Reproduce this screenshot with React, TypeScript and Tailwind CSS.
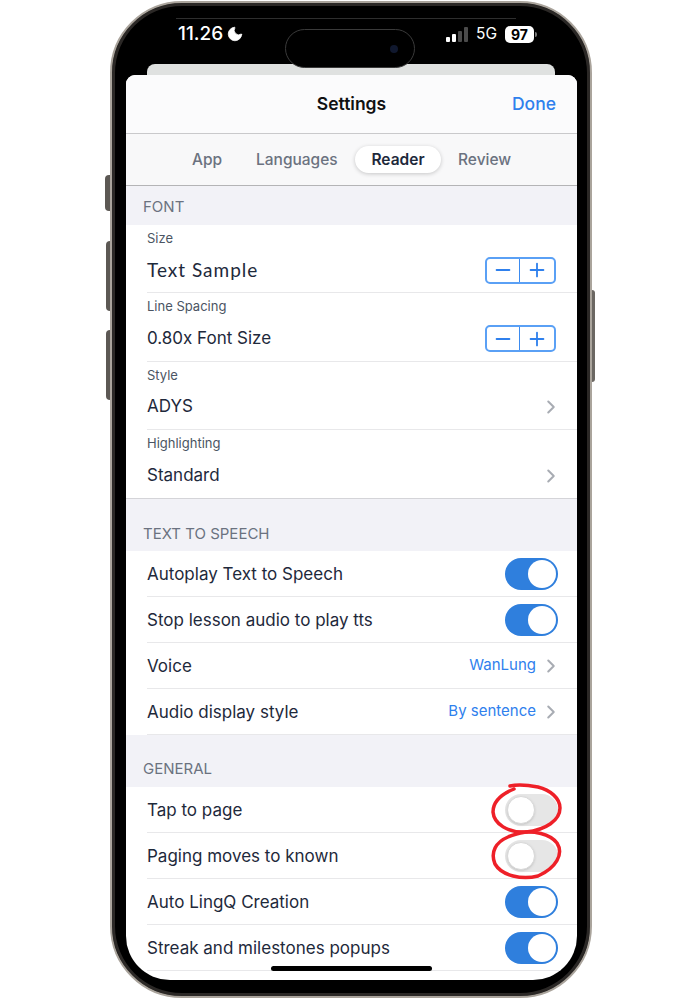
import { ChevronRight, Minus, Moon, Plus } from "lucide-react";

const Section = ({ title, className }: { title: string; className: string }) => (
    <div className={`${className} bg-[#f2f2f7] px-[17px] flex items-end text-[15px] leading-5 text-[#6b7280]`}>
        {title}
    </div>
);

const Stepper = () => (
    <div className="w-[71px] h-[27px] flex rounded-[5px] border-2 border-[#5aa0f5] text-[#2f80ed]">
        <div className="w-[33px] flex items-center justify-center border-r border-[#3b8bf0]">
            <Minus size={22} strokeWidth={2} />
        </div>
        <div className="flex-1 flex items-center justify-center">
            <Plus size={22} strokeWidth={2} />
        </div>
    </div>
);

const Chevron = () => <ChevronRight size={22} strokeWidth={2.2} className="text-[#a8acb3]" />;

const LabelRow = ({ label, height, children }: { label: string; height: string; children: React.ReactNode }) => (
    <div className={`${height} ml-[21px] pt-[5px] flex flex-col border-b border-[#e8e8ea]`}>
        <div className="text-[13px] leading-4 text-[#4b5563]">{label}</div>
        <div className="flex-1 flex items-center justify-between pr-[21px] pt-[2px] text-[17px] text-[#1e293b]">
            {children}
        </div>
    </div>
);

const ChevronRow = ({ label, height, children }: { label: string; height: string; children: React.ReactNode }) => (
    <div className={`${height} ml-[21px] pt-[5px] flex flex-col`}>
        <div className="text-[13px] leading-4 text-[#4b5563]">{label}</div>
        <div className="flex-1 flex items-center justify-between pr-[15px] pt-[2px] text-[17px] text-[#1e293b]">
            {children}
            <Chevron />
        </div>
    </div>
);

const Toggle = ({ on }: { on: boolean }) => (
    <div className={`w-[53px] h-[32px] rounded-full p-[2px] flex ${on ? "bg-[#2f7fdd] justify-end" : "bg-[#e6e6e6] justify-start"}`}>
        <div className={`w-[28px] h-[28px] rounded-full bg-white ${on ? "" : "border border-[#d8d8d8] shadow-sm"}`} />
    </div>
);

const ToggleRow = ({ label, on }: { label: string; on: boolean }) => (
    <div className="h-[46px] ml-[21px] pr-[19px] flex items-center justify-between border-b border-[#e8e8ea] text-[17px] text-[#1e293b]">
        <span className="pt-[2px]">{label}</span>
        <Toggle on={on} />
    </div>
);

const ValueRow = ({ label, value }: { label: string; value: string }) => (
    <div className="h-[46px] ml-[21px] pr-[15px] flex items-center justify-between border-b border-[#e8e8ea] text-[17px] text-[#1e293b]">
        <span className="pt-[2px]">{label}</span>
        <div className="flex items-center gap-[4px] text-[15px] text-[#2f80ed]">
            {value}
            <Chevron />
        </div>
    </div>
);

const App = () => {
    return (
        <div className="relative w-[700px] h-[1000px] bg-white font-['Inter',sans-serif]">
            {/* side buttons */}
            <div className="absolute left-[105px] top-[175px] w-[5px] h-[36px] rounded-l-sm bg-[#5c5854]" />
            <div className="absolute left-[106px] top-[241px] w-[4px] h-[70px] rounded-l-sm bg-[#5c5854]" />
            <div className="absolute left-[106px] top-[330px] w-[4px] h-[70px] rounded-l-sm bg-[#5c5854]" />
            <div className="absolute left-[592px] top-[290px] w-[3px] h-[92px] rounded-r-sm bg-[#6b6762]" />

            <div className="relative left-[110px] top-px w-[482px] h-[997px] rounded-[72px] border-2 border-[#aaa49c] bg-black px-[13px] pb-[16px] flex flex-col shadow-[inset_0_0_0_3px_#2b2826]">
                <div className="h-[61px] shrink-0 flex items-start justify-between pt-[19px] pl-[53px] pr-[40px] text-white">
                    <div className="flex items-center gap-[3px] text-[19px] leading-6 font-medium">
                        11.26
                        <Moon size={18} fill="white" strokeWidth={1} />
                    </div>
                    <div className="flex items-center h-6 text-[15.5px]">
                        <div className="flex items-end gap-[2px] h-[15px] mr-[8px]">
                            <div className="w-[4px] h-[5px] rounded-[1px] bg-white" />
                            <div className="w-[4px] h-[8px] rounded-[1px] bg-white" />
                            <div className="w-[4px] h-[11px] rounded-[1px] bg-[#4b4b4b]" />
                            <div className="w-[4px] h-[15px] rounded-[1px] bg-[#4b4b4b]" />
                        </div>
                        5G
                        <div className="ml-[8px] w-[29px] h-[17px] rounded-[5px] bg-white text-black text-[14px] font-bold flex items-center justify-center">
                            97
                        </div>
                        <div className="ml-px w-[2px] h-[5px] rounded-r-sm bg-[#777]" />
                    </div>
                </div>

                <div className="h-[11px] shrink-0 mx-[22px] rounded-t-lg bg-[#dfe1e0]" />

                <div className="flex-1 min-h-0 ml-px rounded-t-[9px] rounded-b-[44px] bg-white overflow-hidden">
                    <div className="h-[59px] relative flex items-center justify-center bg-[#fbfbfc] border-b border-[#c9c9cb] text-[17.5px] font-semibold text-[#111]">
                        Settings
                        <div className="absolute right-[21px] text-[#2f80ed] font-medium">Done</div>
                    </div>
                    <div className="h-[52px] flex items-center bg-[#f8f8f9] border-b border-[#b4b4b6] pl-[48px] text-[15.5px] font-medium text-[#6b7280]">
                        <div className="w-[82px] pr-[16px] text-center">App</div>
                        <div className="w-[99px]">Languages</div>
                        <div className="w-[86px] h-[27px] rounded-full bg-white shadow-[0_1px_4px_rgba(0,0,0,0.2)] flex items-center justify-center font-semibold text-[#1e293b]">
                            Reader
                        </div>
                        <div className="ml-[17px]">Review</div>
                    </div>

                    <Section title="FONT" className="h-[39px] pb-[8px]" />
                    <LabelRow label="Size" height="h-[68px]">
                        <span className="font-['Lato',sans-serif] tracking-[1px] text-[19px]">Text Sample</span>
                        <Stepper />
                    </LabelRow>
                    <LabelRow label="Line Spacing" height="h-[69px]">
                        0.80x Font Size
                        <Stepper />
                    </LabelRow>
                    <div className="border-b border-[#e8e8ea] ml-[21px]">
                        <div className="-ml-[21px]">
                            <ChevronRow label="Style" height="h-[67px]">ADYS</ChevronRow>
                        </div>
                    </div>
                    <div className="border-b border-[#d4d4d8]">
                        <ChevronRow label="Highlighting" height="h-[68px]">Standard</ChevronRow>
                    </div>

                    <Section title="TEXT TO SPEECH" className="h-[52px] pb-[7px]" />
                    <ToggleRow label="Autoplay Text to Speech" on />
                    <ToggleRow label="Stop lesson audio to play tts" on />
                    <ValueRow label="Voice" value="WanLung" />
                    <ValueRow label="Audio display style" value="By sentence" />

                    <Section title="GENERAL" className="h-[52px] pb-[8px]" />
                    <ToggleRow label="Tap to page" on={false} />
                    <ToggleRow label="Paging moves to known" on={false} />
                    <ToggleRow label="Auto LingQ Creation" on />
                    <ToggleRow label="Streak and milestones popups" on />
                </div>
            </div>

            {/* dynamic island */}
            <div className="absolute left-[285px] top-[29px] w-[130px] h-[39px] rounded-full bg-black border border-[#3a3a3a] flex items-center justify-end pr-[16px]">
                <div className="w-[8px] h-[8px] rounded-full bg-[#10182e]" />
            </div>
            <div className="absolute left-[176px] top-[18px] w-[340px] h-px bg-[#2e2e2e]" />

            {/* home indicator */}
            <div className="absolute left-[271px] top-[966px] w-[161px] h-[5px] rounded-full bg-black" />

            {/* red marks */}
            <svg className="absolute left-[488px] top-[780px]" width="78" height="104" viewBox="0 0 78 104" fill="none" stroke="#ee2028" strokeWidth="3.5" strokeLinecap="round">
                <path d="M22 6 C30 4 40 5 50 7 C62 10 72 18 72 28 C72 40 58 50 38 52 C20 53 6 44 5 32 C5 22 14 14 26 9" />
                <path d="M30 53 C46 50 62 54 69 63 C76 74 68 88 50 96 C34 100 14 96 7 84 C2 72 8 62 20 57 C26 54 32 53 38 52" />
            </svg>
        </div>
    );
};

export default App;
